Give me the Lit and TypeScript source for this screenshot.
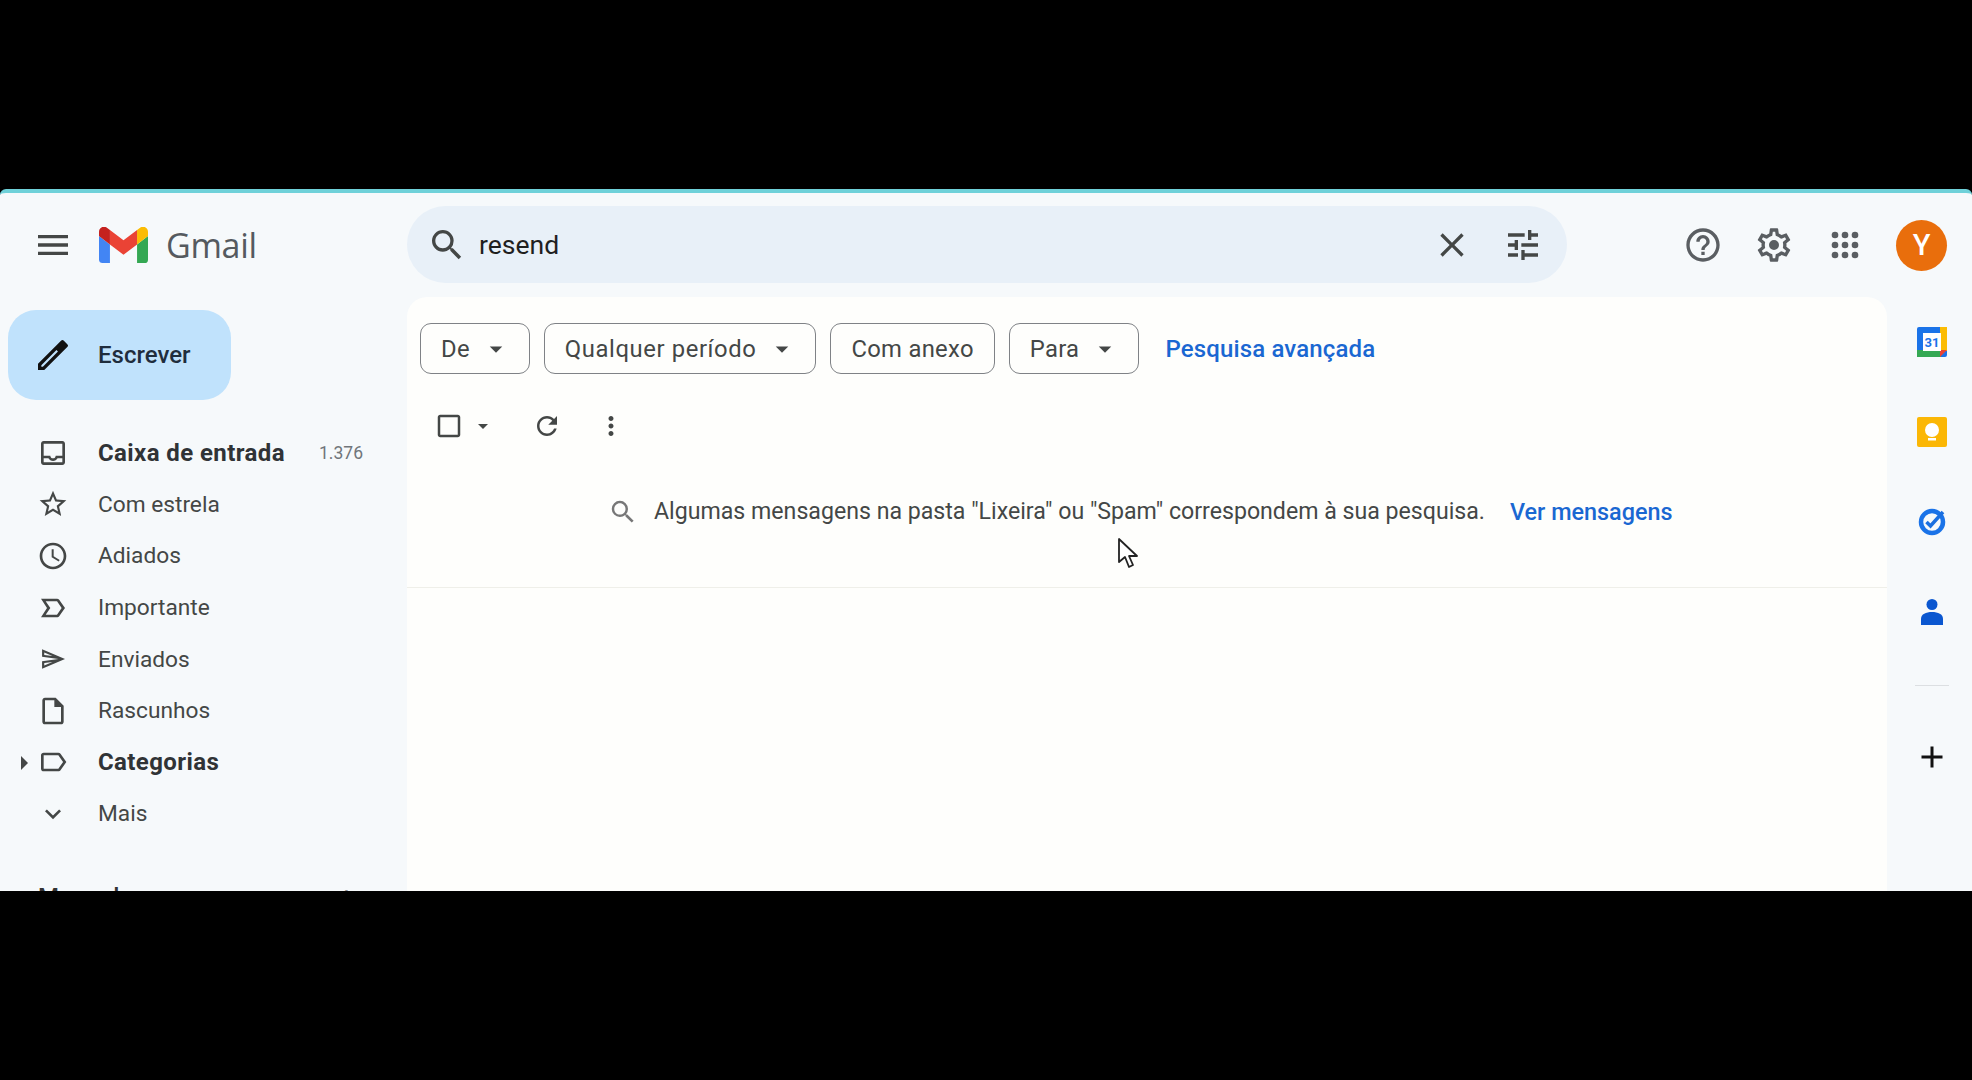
import { LitElement, html, css, svg } from 'lit'
import { customElement } from 'lit/decorators.js'

const P = {
  menu: 'M3 18h18v-2H3v2zm0-5h18v-2H3v2zm0-7v2h18V6H3z',
  search: 'M15.5 14h-.79l-.28-.27A6.471 6.471 0 0 0 16 9.5 6.5 6.5 0 1 0 9.5 16c1.61 0 3.09-.59 4.23-1.57l.27.28v.79l5 4.99L20.49 19l-4.99-5zm-6 0C7.01 14 5 11.99 5 9.5S7.01 5 9.5 5 14 7.01 14 9.5 11.99 14 9.5 14z',
  close: 'M19 6.41L17.59 5 12 10.59 6.41 5 5 6.41 10.59 12 5 17.59 6.41 19 12 13.41 17.59 19 19 17.59 13.41 12z',
  tune: 'M3 17v2h6v-2H3zM3 5v2h10V5H3zm10 16v-2h8v-2h-8v-2h-2v6h2zM7 9v2H3v2h4v2h2V9H7zm14 4v-2H11v2h10zm-6-4h2V7h4V5h-4V3h-2v6z',
  help: 'M11 18h2v-2h-2v2zm1-16C6.48 2 2 6.48 2 12s4.48 10 10 10 10-4.48 10-10S17.52 2 12 2zm0 18c-4.41 0-8-3.59-8-8s3.59-8 8-8 8 3.59 8 8-3.59 8-8 8zm0-14c-2.21 0-4 1.79-4 4h2c0-1.1.9-2 2-2s2 .9 2 2c0 2-3 1.75-3 5h2c0-2.25 3-2.5 3-5 0-2.21-1.79-4-4-4z',
  gear: 'M19.43 12.98c.04-.32.07-.64.07-.98 0-.34-.03-.66-.07-.98l2.11-1.65c.19-.15.24-.42.12-.64l-2-3.46c-.09-.16-.26-.25-.44-.25-.06 0-.12.01-.17.03l-2.49 1c-.52-.4-1.08-.73-1.69-.98l-.38-2.65C14.46 2.18 14.25 2 14 2h-4c-.25 0-.46.18-.49.42l-.38 2.65c-.61.25-1.17.59-1.69.98l-2.49-1c-.06-.02-.12-.03-.18-.03-.17 0-.34.09-.43.25l-2 3.46c-.13.22-.07.49.12.64l2.11 1.65c-.04.32-.07.65-.07.98 0 .33.03.66.07.98l-2.11 1.65c-.19.15-.24.42-.12.64l2 3.46c.09.16.26.25.44.25.06 0 .12-.01.17-.03l2.49-1c.52.4 1.08.73 1.69.98l.38 2.65c.03.24.24.42.49.42h4c.25 0 .46-.18.49-.42l.38-2.65c.61-.25 1.17-.59 1.69-.98l2.49 1c.06.02.12.03.18.03.17 0 .34-.09.43-.25l2-3.46c.12-.22.07-.49-.12-.64l-2.11-1.65zm-1.98-1.71c.04.31.05.52.05.73 0 .21-.02.43-.05.73l-.14 1.13.89.7 1.08.84-.7 1.21-1.27-.51-1.04-.42-.9.68c-.43.32-.84.56-1.25.73l-1.06.43-.16 1.13-.2 1.35h-1.4l-.19-1.35-.16-1.13-1.06-.43c-.43-.18-.83-.41-1.23-.71l-.91-.7-1.06.43-1.27.51-.7-1.21 1.08-.84.89-.7-.14-1.13c-.03-.31-.05-.54-.05-.74s.02-.43.05-.73l.14-1.13-.89-.7-1.08-.84.7-1.21 1.27.51 1.04.42.9-.68c.43-.32.84-.56 1.25-.73l1.06-.43.16-1.13.2-1.35h1.39l.19 1.35.16 1.13 1.06.43c.43.18.83.41 1.23.71l.91.7 1.06-.43 1.27-.51.7 1.21-1.07.85-.89.7.14 1.13zM12 9a3 3 0 1 0 0 6 3 3 0 0 0 0-6z',
  inbox: 'M19 3H5c-1.1 0-2 .9-2 2v14c0 1.1.9 2 2 2h14c1.1 0 2-.9 2-2V5c0-1.1-.9-2-2-2zm0 16H5v-3h3.56c.69 1.19 1.97 2 3.45 2s2.75-.81 3.45-2H19v3zm0-5h-4.99c0 1.1-.9 2-2 2s-2-.9-2-2H5V5h14v9z',
  star: 'M22 9.24l-7.19-.62L12 2 9.19 8.63 2 9.24l5.46 4.73L5.82 21 12 17.27 18.18 21l-1.63-7.03L22 9.24zM12 15.4l-3.76 2.27 1-4.28-3.32-2.88 4.38-.38L12 6.1l1.71 4.04 4.38.38-3.32 2.88 1 4.28L12 15.4z',
  clock: 'M11.99 2C6.47 2 2 6.48 2 12s4.47 10 9.99 10C17.52 22 22 17.52 22 12S17.52 2 11.99 2zM12 20c-4.42 0-8-3.58-8-8s3.58-8 8-8 8 3.58 8 8-3.58 8-8 8zm.5-13H11v6l5.25 3.15.75-1.23-4.5-2.67z',
  important: 'M15 19H3l4.5-7L3 5h12c.65 0 1.26.31 1.63.84L21 12l-4.37 6.16c-.37.53-.98.84-1.63.84zm-8.5-2H15l3.5-5L15 7H6.5l3.5 5-3.5 5z',
  send: 'M4.01 6.03l7.51 3.22-7.52-1 .01-2.22m7.5 8.72L4 17.97v-2.22l7.51-1M2.01 3L2 10l15 2-15 2 .01 7L23 12 2.01 3z',
  draft: 'M14 2H6c-1.1 0-1.99.9-1.99 2L4 20c0 1.1.89 2 1.99 2H18c1.1 0 2-.9 2-2V8l-6-6zM6 20V4h7v5h5v11H6z',
  label: 'M17.63 5.84C17.27 5.33 16.67 5 16 5L5 5.01C3.9 5.01 3 5.9 3 7v10c0 1.1.9 1.99 2 1.99L16 19c.67 0 1.27-.33 1.63-.84L22 12l-4.37-6.16zM16 17H5V7h11l3.55 5L16 17z',
  expand: 'M16.59 8.59L12 13.17 7.41 8.59 6 10l6 6 6-6z',
  refresh: 'M17.65 6.35C16.2 4.9 14.21 4 12 4c-4.42 0-7.99 3.58-7.99 8s3.57 8 7.99 8c3.73 0 6.84-2.55 7.73-6h-2.08c-.82 2.33-3.04 4-5.65 4-3.31 0-6-2.69-6-6s2.69-6 6-6c1.66 0 3.14.69 4.22 1.78L13 11h7V4l-2.35 2.35z',
  dots: 'M12 8c1.1 0 2-.9 2-2s-.9-2-2-2-2 .9-2 2 .9 2 2 2zm0 2c-1.1 0-2 .9-2 2s.9 2 2 2 2-.9 2-2-.9-2-2-2zm0 6c-1.1 0-2 .9-2 2s.9 2 2 2 2-.9 2-2-.9-2-2-2z',
  box: 'M19 5v14H5V5h14m0-2H5c-1.1 0-2 .9-2 2v14c0 1.1.9 2 2 2h14c1.1 0 2-.9 2-2V5c0-1.1-.9-2-2-2z',
  // no gap between the body and the cap, as in the reference
  edit: 'M3 17.25V21h3.75L20.71 7.04a.996.996 0 0 0 0-1.41l-2.34-2.34a.996.996 0 0 0-1.41 0L3 17.25zM5.92 19H5v-.92l9.06-9.06.92.92L5.92 19z',
  plus: 'M19 13h-6v6h-2v-6H5v-2h6V5h2v6h6v2z',
  arrow: 'M7 10l5 5 5-5z',
}

const icon = (d: string, cls = '') => html`<svg class="icon ${cls}" viewBox="0 0 24 24"><path d=${d} fill-rule="evenodd"></path></svg>`

const nav = [
  { icon: P.inbox, text: 'Caixa de entrada', bold: true, count: '1.376' },
  { icon: P.star, text: 'Com estrela' },
  { icon: P.clock, text: 'Adiados' },
  { icon: P.important, text: 'Importante' },
  { icon: P.send, text: 'Enviados', cls: 'send' },
  { icon: P.draft, text: 'Rascunhos' },
  { icon: P.label, text: 'Categorias', bold: true, caret: true },
  { icon: P.expand, text: 'Mais' },
]

const chips = [
  { text: 'De', arrow: true },
  { text: 'Qualquer período', arrow: true, cls: 'wide' },
  { text: 'Com anexo' },
  { text: 'Para', arrow: true },
]

const gmailLogo = svg`
  <path fill="#4285f4" d="M3.5 40h8V20.6L0 12v24.5C0 38.43 1.57 40 3.5 40"/>
  <path fill="#34a853" d="M40 40h8a3.5 3.5 0 0 0 3.5-3.5V12L40 20.6"/>
  <path fill="#fbbc04" d="M40 5.7V20.6L51.5 12V7.4c0-4.3-4.9-6.7-8.3-4.1"/>
  <path fill="#ea4335" d="M11.5 20.6V5.7L25.75 16.4 40 5.7V20.6L25.75 31.3"/>
  <path fill="#c5221f" d="M0 7.4V12l11.5 8.6V5.7L8.3 3.3C4.9.7 0 3.1 0 7.4"/>`

const appDots = [6, 12, 18].flatMap(y => [6, 12, 18].map(x => svg`<circle cx=${x} cy=${y} r="2"></circle>`))

@customElement('app-root')
export class AppRoot extends LitElement {
  static styles = css`
:host {
  display: block;
  box-sizing: border-box;
  height: 1080px;
  padding-top: 189px;
  background: #000;
  font-family: Roboto, "Liberation Sans", sans-serif;
  color: #3c4043;
}

.window {
  box-sizing: border-box;
  height: 702px;
  border-top: 4px solid #6fd1d9;
  border-radius: 6px 6px 0 0;
  background: #f6f9fb;
  overflow: hidden;
  display: flex;
  flex-direction: column;
}

.icon {
  display: block;
  flex: none;
  width: 40px;
  height: 40px;
  fill: #444746;
}

.topbar {
  flex: none;
  height: 104px;
  display: flex;
  align-items: center;
}

.brand {
  flex: none;
  width: 407px;
  box-sizing: border-box;
  padding: 0 0 0 33px;
  display: flex;
  align-items: center;
}

.brand .logo {
  width: 49px;
  height: 36px;
  margin-left: 26px;
}

.wordmark {
  margin-left: 18px;
  font-family: "Open Sans", sans-serif;
  font-size: 34px;
  letter-spacing: -0.3px;
  color: #555a5f;
}

.search {
  flex: none;
  width: 1160px;
  height: 77px;
  box-sizing: border-box;
  margin-top: -1px;
  padding: 0 24px 0 20px;
  border-radius: 39px;
  background: #e8f0f8;
  display: flex;
  align-items: center;
  font-size: 26.5px;
  color: #1f1f1f;
}

.search .q {
  margin-left: 12px;
  flex: 1;
}

.search .icon + .icon {
  margin-left: 31px;
}

.actions {
  flex: 1;
  display: flex;
  align-items: center;
  padding-left: 116px;
}

.actions .icon {
  margin-right: 31px;
  fill: #5a5e62;
}

.actions .icon.apps {
  margin-right: 32px;
}

.avatar {
  width: 51px;
  height: 51px;
  margin-left: -1px;
  border-radius: 50%;
  background: #e96e0c;
  color: #fff;
  font-size: 29px;
  font-weight: 500;
  display: flex;
  align-items: center;
  justify-content: center;
}

.body {
  flex: 1;
  min-height: 0;
  display: flex;
}

.sidebar {
  flex: none;
  width: 407px;
  overflow: hidden;
}

.compose {
  width: 223px;
  height: 90px;
  margin: 13px 0 27px 8px;
  border-radius: 28px;
  background: #c0e2fc;
  display: flex;
  align-items: center;
  padding-left: 25px;
  box-sizing: border-box;
  color: #1f2d3d;
  font-size: 24px;
  font-weight: 500;
}

.compose .icon {
  fill: #111;
  margin-right: 25px;
}

.row {
  position: relative;
  height: 51.6px;
  display: flex;
  align-items: center;
  padding: 0 44px 0 37px;
  font-size: 22.7px;
  color: #444746;
}

.row .icon {
  width: 32px;
  height: 32px;
  margin-right: 29px;
  fill: #444746;
}

.row .icon.send {
  transform: scale(0.82);
}

.row.bold {
  font-size: 24px;
  letter-spacing: 0.4px;
  font-weight: 700;
  color: #303336;
}

.row .text {
  flex: 1;
}

.count {
  font-size: 17.5px;
  font-weight: 400;
  letter-spacing: 0;
  color: #70757a;
}

.caret {
  position: absolute;
  left: 21px;
  top: 19px;
  width: 0;
  height: 0;
  border-left: 7px solid #444746;
  border-top: 7px solid transparent;
  border-bottom: 7px solid transparent;
}

.section {
  margin: 43px 0 0 38px;
  display: flex;
  justify-content: space-between;
  padding-right: 54px;
  font-size: 24px;
  font-weight: 500;
  color: #333;
}

.main {
  flex: 1;
  border-radius: 20px 20px 0 0;
  background: #fefefc;
  min-width: 0;
}

.chips {
  height: 51px;
  margin: 26px 0 0 13px;
  display: flex;
  align-items: stretch;
  gap: 14px;
}

.chip {
  display: flex;
  align-items: center;
  padding: 0 20px;
  border: 1.5px solid #7f8286;
  border-radius: 11px;
  font-size: 23.8px;
  letter-spacing: 0.3px;
  color: #444746;
}

.chip.wide {
  letter-spacing: 0.6px;
}

.chip .arrow {
  width: 30px;
  height: 30px;
  margin: 0 -2px 0 11px;
}

.link {
  align-self: center;
  margin-left: 12px;
  font-size: 24px;
  letter-spacing: 0.15px;
  font-weight: 500;
  color: #1a67d2;
}

.tools {
  height: 40px;
  margin: 32px 0 0 27px;
  display: flex;
  align-items: center;
}

.tools .icon {
  width: 30px;
  height: 30px;
  fill: #444746;
}

.tools .check {
  width: 30px;
  height: 30px;
}

.tools .drop {
  width: 24px;
  height: 24px;
  margin: 0 37px 0 7px;
}

.tools .dots {
  margin-left: 34px;
}

.notice {
  position: relative;
  height: 126px;
  margin-top: 16px;
  border-bottom: 1px solid #efefe9;
  display: flex;
  align-items: center;
  padding-left: 201px;
  padding-bottom: 26px;
  box-sizing: border-box;
  font-size: 23.15px;
  color: #444746;
}

.notice .icon {
  width: 30px;
  height: 30px;
  margin-right: 16px;
  fill: #777;
}

.notice .link {
  margin-left: 25px;
  font-size: 23.4px;
  letter-spacing: 0;
}

.cursor {
  position: absolute;
  left: 710px;
  top: 75px;
  width: 22px;
  height: 32px;
}

.rail {
  flex: none;
  width: 85px;
  box-sizing: border-box;
  display: flex;
  flex-direction: column;
  align-items: center;
  padding: 30px 0 0 5px;
}

.rail svg {
  display: block;
  width: 30px;
  height: 30px;
  margin-bottom: 60px;
}

.rail hr {
  width: 34px;
  margin: -2px 0 53px;
  border: 0;
  border-top: 1px solid #dcdfe2;
}

.rail .plus {
  width: 36px;
  height: 36px;
  fill: #111;
  margin: 0;
}
`

  render () {
    return html`
<div class="window">
  <header class="topbar">
    <div class="brand">
      ${icon(P.menu)}
      <svg class="logo" viewBox="0 2.5 51.5 37.5" preserveAspectRatio="none">${gmailLogo}</svg>
      <span class="wordmark">Gmail</span>
    </div>
    <div class="search">
      ${icon(P.search)}
      <span class="q">resend</span>
      ${icon(P.close)}
      ${icon(P.tune)}
    </div>
    <div class="actions">
      ${icon(P.help)}
      ${icon(P.gear)}
      <svg class="icon apps" viewBox="0 0 24 24">${appDots}</svg>
      <div class="avatar">Y</div>
    </div>
  </header>
  <div class="body">
    <aside class="sidebar">
      <div class="compose">${icon(P.edit)}Escrever</div>
      ${nav.map(n => html`
        <div class="row ${n.bold ? 'bold' : ''}">
          ${n.caret ? html`<span class="caret"></span>` : ''}
          ${icon(n.icon, n.cls ?? '')}
          <span class="text">${n.text}</span>
          ${n.count ? html`<span class="count">${n.count}</span>` : ''}
        </div>`)}
      <div class="section"><span>Marcadores</span><span>+</span></div>
    </aside>
    <main class="main">
      <div class="chips">
        ${chips.map(c => html`
          <div class="chip ${c.cls ?? ''}">${c.text}${c.arrow ? icon(P.arrow, 'arrow') : ''}</div>`)}
        <span class="link">Pesquisa avançada</span>
      </div>
      <div class="tools">
        ${icon(P.box, 'check')}
        ${icon(P.arrow, 'drop')}
        ${icon(P.refresh)}
        ${icon(P.dots, 'dots')}
      </div>
      <div class="notice">
        ${icon(P.search)}
        <span>Algumas mensagens na pasta "Lixeira" ou "Spam" correspondem à sua pesquisa.</span>
        <span class="link">Ver mensagens</span>
        <svg class="cursor" viewBox="0 0 22 32">
          <path d="M2 2v23l6-5 4 10 4-2-4-9h8z" fill="#fff" stroke="#222" stroke-width="1.8" stroke-linejoin="round"></path>
        </svg>
      </div>
    </main>
    <nav class="rail">
      <svg viewBox="0 0 30 30">
        <rect x="0" y="0" width="30" height="30" rx="2" fill="#1a73e8"></rect>
        <rect x="23" y="0" width="7" height="24" fill="#fbbc04"></rect>
        <rect x="0" y="23" width="24" height="7" fill="#34a853"></rect>
        <path d="M23 23h7l-7 7z" fill="#ea4335"></path>
        <rect x="6" y="6" width="18" height="18" fill="#fff"></rect>
        <text x="15" y="20" text-anchor="middle" font-size="13" font-weight="700" fill="#1a73e8" font-family="Roboto, sans-serif">31</text>
      </svg>
      <svg viewBox="0 0 30 30">
        <rect width="30" height="30" rx="2" fill="#fbb705"></rect>
        <circle cx="15" cy="13" r="7" fill="#fff"></circle>
        <rect x="11" y="21" width="8" height="2.5" fill="#fff"></rect>
      </svg>
      <svg viewBox="0 0 30 30">
        <circle cx="15" cy="15" r="11" fill="none" stroke="#1a73e8" stroke-width="4.5"></circle>
        <path d="M9.5 15l4 4L26 5" fill="none" stroke="#1a6fe0" stroke-width="3.5"></path>
      </svg>
      <svg viewBox="0 0 30 30">
        <circle cx="15" cy="7.5" r="5.5" fill="#0b57d0"></circle>
        <path d="M4 28v-6c0-5 5-7 11-7s11 2 11 7v6z" fill="#0b57d0"></path>
      </svg>
      <hr />
      <svg class="plus" viewBox="0 0 24 24"><path d=${P.plus}></path></svg>
    </nav>
  </div>
</div>
`
  }
}
